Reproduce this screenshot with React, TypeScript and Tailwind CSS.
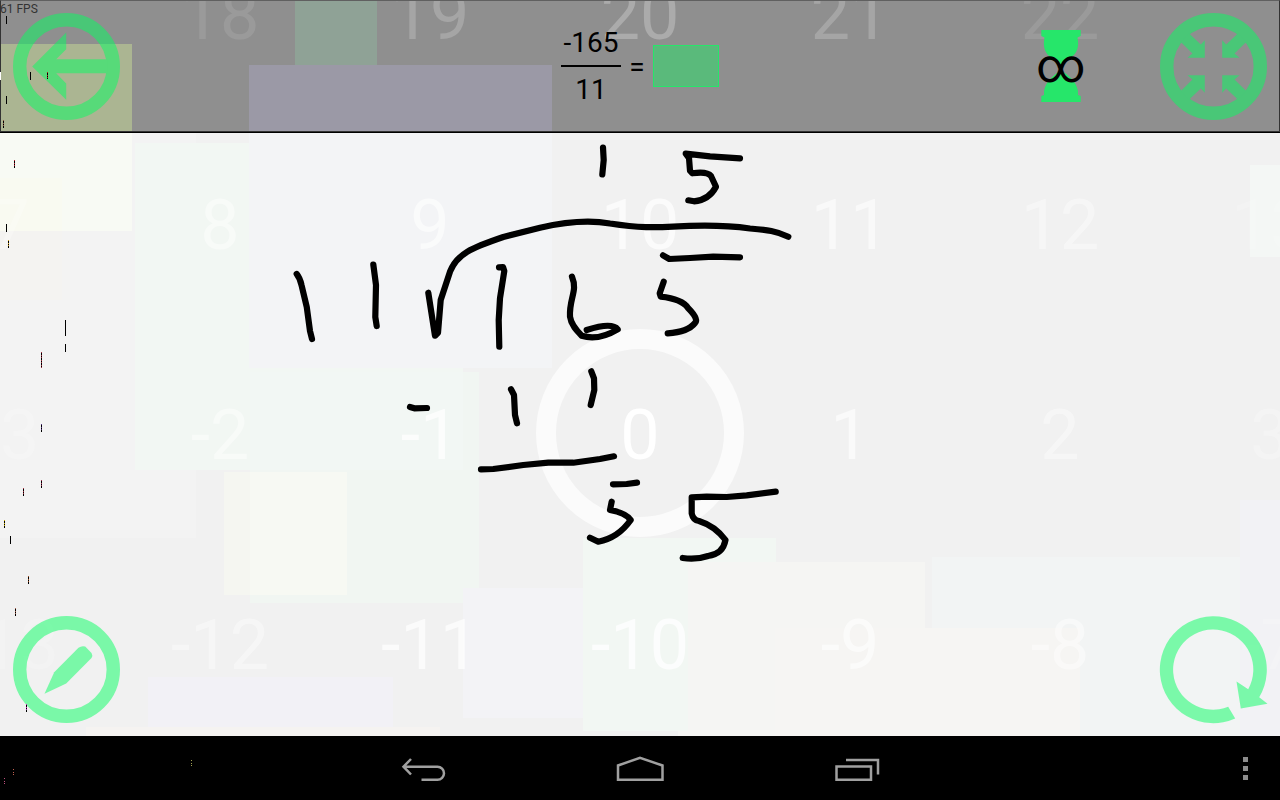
import type { ReactNode } from "react";

type Tile = { x: number; y: number; w: number; h: number; fill: string };

const headerTiles: Tile[] = [
  { x: 0, y: 44, w: 132, h: 89, fill: "#abb592" },
  { x: 295, y: 0, w: 82, h: 68, fill: "#8fa296" },
  { x: 249, y: 65, w: 303, h: 68, fill: "#9b99a6" },
];

const boardTiles: Tile[] = [
  { x: 0, y: 133, w: 196, h: 405, fill: "#f3f3f3" },
  { x: 0, y: 178, w: 62, h: 122, fill: "#f4f3f1" },
  { x: 0, y: 133, w: 132, h: 98, fill: "#f8faf4" },
  { x: 0, y: 178, w: 62, h: 53, fill: "#f9faf1" },
  { x: 135, y: 143, w: 328, h: 327, fill: "#f2f7f3" },
  { x: 463, y: 133, w: 30, h: 240, fill: "#f1f1f1" },
  { x: 224, y: 472, w: 123, h: 123, fill: "#f5f6f1" },
  { x: 250, y: 372, w: 229, h: 231, fill: "#f1f6f2" },
  { x: 250, y: 372, w: 213, h: 98, fill: "#f2f7f4" },
  { x: 250, y: 472, w: 97, h: 123, fill: "#f7f9f3" },
  { x: 249, y: 133, w: 303, h: 235, fill: "#f3f4f6" },
  { x: 148, y: 677, w: 245, h: 59, fill: "#f2f1f6" },
  { x: 86, y: 727, w: 354, h: 9, fill: "#f5f3f1" },
  { x: 463, y: 588, w: 122, h: 130, fill: "#f3f3f6" },
  { x: 678, y: 562, w: 247, h: 174, fill: "#f5f5f3" },
  { x: 583, y: 538, w: 193, h: 193, fill: "#f2f7f3" },
  { x: 688, y: 562, w: 88, h: 174, fill: "#f5f5f3" },
  { x: 932, y: 557, w: 348, h: 179, fill: "#f2f4f4" },
  { x: 775, y: 628, w: 305, h: 108, fill: "#f6f5f3" },
  { x: 1240, y: 500, w: 40, h: 236, fill: "#f2f2f5" },
  { x: 1250, y: 165, w: 30, h: 92, fill: "#f4f7f5" },
];

const headerNumbers: [string, string][] = [
  ["18", "text-white/10"],
  ["19", "text-white/20"],
  ["20", "text-white/25"],
  ["21", "text-white/20"],
  ["22", "text-white/10"],
];

const boardNumbers: [string, string][] = [
  ["7", "text-white/25"],
  ["8", "text-white/45"],
  ["9", "text-white/60"],
  ["10", "text-white/70"],
  ["11", "text-white/60"],
  ["12", "text-white/40"],
  ["13", "text-white/15"],
  ["-3", "text-white/20"],
  ["-2", "text-white/45"],
  ["-1", "text-white/75"],
  ["0", "text-white"],
  ["1", "text-white/65"],
  ["2", "text-white/40"],
  ["3", "text-white/25"],
  ["-13", "text-white/15"],
  ["-12", "text-white/40"],
  ["-11", "text-white/70"],
  ["-10", "text-white/80"],
  ["-9", "text-white/60"],
  ["-8", "text-white/45"],
  ["-7", "text-white/15"],
];

const strokes = [
  "M603 147.5 L603.7 160 L602.3 174.5",
  "M740 158.3 L710 156.3 L685.7 153.7 L689 158 L690 170.7 L692.3 173.3 Q707 171 711 176 L716 186.7 Q709 200 694 201.3 L688.3 200.3",
  "M428.3 292.7 L435 335.7 L438 332.7 L440.7 300 Q444 290 450 271.7 C457 254 471 248 503.3 237 L540 227.7 C565 222 590 220 610 223.5 C640 228 655 227.5 673 226.7 C700 225 725 225 750 228.5 C768 230 776 231 788.3 236.7",
  "M663 255.3 L669.3 259 L690 258 L713.3 256.7 L740 257.3",
  "M296.7 274 Q300 278 301.5 285 L306.7 306.7 L310 331 L312 339",
  "M373.3 264.5 L376 285 L375.3 317 L376.7 326",
  "M499 267.3 L503 267 L504.3 271 L500 298.3 L498.7 320 L499.3 346.7",
  "M572 276.7 C578 291 569 298 570 316.7 C571 325 577 331 581.7 335.7 Q598 341 617.7 329.3 Q612 322 586.7 330",
  "M663.7 281.7 L659.7 293.3 L660.7 296.7 Q682 299 688 308 Q699 319 695 323 Q688 332 667.7 333.3",
  "M410 407 L414.3 408.3 L427 408",
  "M511 389.3 L514 395 L515 415 L517 423.3",
  "M591.3 371.3 L594 378.3 L594.3 390 L590.7 405",
  "M481 469.3 L493.3 469 L523.3 465 L548.3 462.7 L573.3 462.7 L600 459 L614 456.3",
  "M613 484.3 L626.7 484 L637 482.7",
  "M611.7 501.7 L610 510 Q626 513 630.7 520 Q618 538 598.3 541.7 L590 537.7",
  "M775.7 491.7 L746.7 495.3 L726.7 497 L706.7 496.7 L691.7 497.3 L691.7 513.3 Q693 520 699 521 Q715 526 725.5 540 Q723 554 708 556 Q696 560 682.7 558",
];

type Speck = [x: number, y: number, h: number, tint?: string];

const specks: Speck[] = [
  [6, 16, 8],
  [0, 72, 8, "#ffffff"],
  [30, 72, 8],
  [47, 72, 7, "#b02020"],
  [6, 96, 8],
  [3, 120, 8, "#8a5a40"],
  [14, 160, 8, "#c02030"],
  [6, 224, 8],
  [8, 240, 8, "#d0a020"],
  [65, 320, 16],
  [65, 344, 8],
  [41, 352, 16, "#a03040"],
  [41, 424, 8, "#503080"],
  [41, 480, 8, "#a03050"],
  [23, 488, 8, "#a03040"],
  [4, 520, 8, "#d0b000"],
  [10, 536, 8],
  [28, 576, 8, "#a05020"],
  [15, 608, 8, "#a06050"],
  [26, 704, 8, "#c030c0"],
  [191, 760, 7, "#a0a050"],
  [13, 769, 7, "#c06050"],
  [4, 778, 6, "#c05080"],
];

function Tiles({ tiles, viewBox }: { tiles: Tile[]; viewBox: string }) {
  return (
    <svg
      aria-hidden="true"
      className="absolute inset-0 h-full w-full"
      viewBox={viewBox}
      preserveAspectRatio="xMidYMin slice"
      shapeRendering="crispEdges"
    >
      {tiles.map((t, i) => (
        <rect key={i} x={t.x} y={t.y} width={t.w} height={t.h} fill={t.fill} />
      ))}
    </svg>
  );
}

function NumberCells({ numbers }: { numbers: [string, string][] }) {
  return (
    <>
      {numbers.map(([value, tone]) => (
        <span key={value} className={tone}>
          {value}
        </span>
      ))}
    </>
  );
}

function RoundButton({ label, ring = true, children }: { label: string; ring?: boolean; children: ReactNode }) {
  return (
    <button type="button" aria-label={label} className="block size-[107px] shrink-0 rounded-full opacity-50">
      <svg className="size-full overflow-visible" viewBox="-53.5 -53.5 107 107" fill="#05ff61">
        {ring && <circle r="46.8" fill="none" stroke="#05ff61" strokeWidth="13.4" />}
        {children}
      </svg>
    </button>
  );
}

const inwardArrow =
  "M-8.7 -26.3 L-8.7 -8.7 L-26 -8.7 L-21 -13 L-33 -24.7 L-24.3 -33 L-12.7 -22 Z";

function Header() {
  return (
    <header className="relative h-[133px] overflow-hidden border-b border-black bg-[#8f8f8f]">
      <Tiles tiles={headerTiles} viewBox="0 0 1280 132" />
      <div className="absolute inset-x-0 -top-[90px] grid grid-cols-[repeat(5,210px)] justify-center text-center text-[70px] leading-[210px]">
        <NumberCells numbers={headerNumbers} />
      </div>
      <div className="absolute inset-0 border border-[#333333] border-t-[#606060]" />
      <p className="absolute left-0 top-0 text-xs leading-[18px] text-[#333333]">61 FPS</p>
      <div className="relative grid h-full grid-cols-[1fr_auto_1fr] items-center px-[13px]">
        <RoundButton label="Back">
          <path d="M-34.3 0 L-.3 -34 L-.3 -17.3 L-10.3 -7.3 L41 -7.3 L41 6.7 L-10.3 6.7 L-.3 17 L-.3 33.3 Z" />
        </RoundButton>
        <div className="flex items-center text-[28px] leading-[45px] text-black">
          <div className="w-[60px] text-center">
            <div className="border-b-2 border-black">-165</div>
            <div>11</div>
          </div>
          <span className="w-8 text-center">=</span>
          <input
            aria-label="Answer"
            className="h-[42px] w-[66px] border border-[#26e66a] bg-[#5aba7b] text-center outline-none"
          />
        </div>
        <div className="flex items-center justify-end gap-[75px]">
          <div className="relative flex w-12 justify-center">
            <svg aria-hidden="true" className="h-[72px] w-10" viewBox="-20 29 40 72" fill="#26e66a">
              <path d="M-19.7 29 H19.7 V35 L16.5 36.5 C18.5 46 16 53 9 57 C4 61 1 65 .5 69.5 C8 75 15 80 17 90 V94 L19.7 95 V101 H-19.7 V95 L-17 94 V90 C-15 80 -8 75 -.5 69.5 C-1 65 -4 61 -9 57 C-16 53 -18.5 46 -16.5 36.5 L-19.7 35 Z" />
            </svg>
            <span className="absolute inset-0 flex items-center justify-center text-5xl leading-none text-black">
              ∞
            </span>
          </div>
          <RoundButton label="Exit full screen">
            <path d={inwardArrow} />
            <path d={inwardArrow} transform="scale(-1 1)" />
            <path d={inwardArrow} transform="scale(1 -1)" />
            <path d={inwardArrow} transform="scale(-1 -1)" />
          </RoundButton>
        </div>
      </div>
    </header>
  );
}

function Board() {
  return (
    <main className="relative flex min-h-[603px] flex-1 items-end justify-between overflow-hidden bg-[#f1f1f1] p-[13px]">
      <Tiles tiles={boardTiles} viewBox="0 133 1280 603" />
      <div className="absolute inset-x-0 -top-[13px] grid grid-cols-[repeat(7,210px)] justify-center text-center text-[70px] leading-[210px]">
        <NumberCells numbers={boardNumbers} />
      </div>
      <div className="absolute inset-x-0 top-[196px] flex justify-center">
        <div className="size-[208px] rounded-full border-[20px] border-white/70" />
      </div>
      <div className="relative">
        <RoundButton label="Draw">
          <path d="M-22 24.3 L-12.3 2.7 L12 -21.7 Q15 -24 18.7 -23 L25 -16.5 Q26.5 -14 25 -11.5 L-.3 14 Z" />
        </RoundButton>
      </div>
      <div className="relative">
        <RoundButton label="Clear drawing" ring={false}>
          <path d="M21.7 49 A53.5 53.5 0 1 1 45.7 27.7 L54 34.3 L27.3 39 L23 12 L34.7 19.7 A40.1 40.1 0 1 0 14.7 37.3 Z" />
        </RoundButton>
      </div>
    </main>
  );
}

function NavBar() {
  return (
    <nav className="grid h-16 grid-cols-[1fr_auto_1fr] items-center bg-black">
      <span />
      <div className="flex">
        <button type="button" aria-label="Back" className="flex w-[216px] justify-center">
          <svg className="h-[30px] w-12" viewBox="400 753 48 30" fill="none" stroke="#a0a0a0" strokeWidth="2.5">
            <path d="M411 759 L403.5 766.7 L411 774.5 M403.5 766.7 H437.5 A6.5 6.5 0 0 1 437.5 779.7 H421.5" />
          </svg>
        </button>
        <button type="button" aria-label="Home" className="flex w-[216px] justify-center">
          <svg className="h-[30px] w-12" viewBox="616 753 48 30" fill="none" stroke="#a0a0a0" strokeWidth="2.5">
            <path d="M618 779.7 V765.5 L640 757.7 L662.5 765.5 V779.7 Z" />
          </svg>
        </button>
        <button type="button" aria-label="Recent apps" className="flex w-[216px] justify-center">
          <svg className="h-[30px] w-12" viewBox="832 753 48 30" fill="none" stroke="#a0a0a0" strokeWidth="2.5">
            <path d="M836.5 766.5 H871 V779.7 H836.5 Z M846 760 H878 V774.5" />
          </svg>
        </button>
      </div>
      <button type="button" aria-label="More options" className="flex flex-col gap-1 justify-self-end pr-8">
        <span className="h-[5px] w-[5px] bg-[#8c8c8c]" />
        <span className="h-[5px] w-[5px] bg-[#8c8c8c]" />
        <span className="h-[5px] w-[5px] bg-[#8c8c8c]" />
      </button>
    </nav>
  );
}

function InkLayer() {
  return (
    <svg
      aria-hidden="true"
      className="pointer-events-none absolute inset-0 h-full w-full"
      viewBox="0 0 1280 800"
      preserveAspectRatio="xMidYMin slice"
    >
      <g fill="none" stroke="#000000" strokeWidth="6.2" strokeLinecap="round" strokeLinejoin="round">
        {strokes.map((d) => (
          <path key={d} d={d} />
        ))}
      </g>
      <g shapeRendering="crispEdges">
        {specks.map(([x, y, h, tint]) => (
          <g key={`${x}-${y}`}>
            <rect x={x} y={y} width="1" height={h} fill={tint === "#ffffff" ? tint : "#000000"} />
            {tint && (
              <path d={`M${x + 0.5} ${y} V${y + h}`} stroke={tint} strokeWidth="1" strokeDasharray="1 2 1 1" />
            )}
          </g>
        ))}
      </g>
    </svg>
  );
}

export default function App() {
  return (
    <div className="relative flex min-h-screen flex-col font-[Roboto,sans-serif]">
      <Header />
      <Board />
      <NavBar />
      <InkLayer />
    </div>
  );
}
